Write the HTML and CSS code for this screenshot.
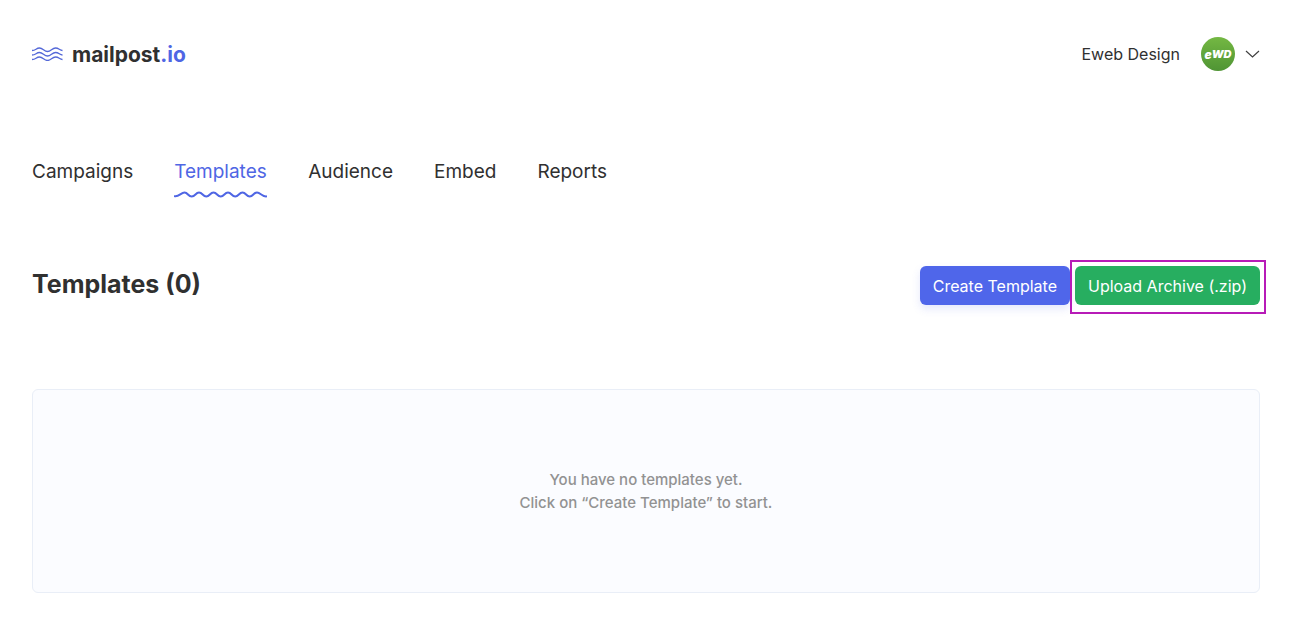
FILE: index.html
```html
<!DOCTYPE html>
<html lang="en">
<head>
    <meta charset="UTF-8">
    <meta name="viewport" content="width=device-width, initial-scale=1.0">
    <title>Templates - mailpost.io</title>
    <link rel="stylesheet" href="styles.css">
</head>
<body>
<header class="header">
    <a class="logo" href="#">
        <svg class="logo-waves" viewBox="0 0 32 14" aria-hidden="true">
            <path d="M0 3.500C4 3.500 4 1 7.500 1s4.500 3.500 8 3.500S20 1 23.500 1s4 2.500 7 2.500"/>
            <path d="M0 8C4 8 4 5.500 7.500 5.500S12 9 15.500 9s4.500-3.500 8-3.500S27.500 8 30.500 8"/>
            <path d="M0 12.500C4 12.500 4 10 7.500 10s4.500 3.500 8 3.500 4.500-3.500 8-3.500 4 2.500 7 2.500"/>
        </svg>
        <span class="logo-text">mailpost<span class="logo-io">.io</span></span>
    </a>

    <button class="account" type="button">
        <span class="account-name">Eweb Design</span>
        <span class="avatar">e<span class="avatar-wd">WD</span></span>
        <svg class="chevron" viewBox="0 0 15 8" aria-hidden="true"><path d="M1 1l6.500 6L14 1"/></svg>
    </button>
</header>

<nav class="nav">
    <a class="nav-link" href="#">Campaigns</a>
    <a class="nav-link active" href="#">Templates
        <svg class="nav-wave" viewBox="0 0 93 7" preserveAspectRatio="none" aria-hidden="true">
            <path d="M0 5C4 7 7 1.500 10.500 1.500S14 5.500 17.700 5.500 21.500 1.500 25 1.500s3.800 4 7.300 4S36 1.500 39.500 1.500s3.700 4 7.200 4S50.500 1.500 54 1.500s3.700 4 7.200 4S65 1.500 68.500 1.500s3.700 4 7.200 4S79.500 1.500 83 1.500s6 5 10 3.800"/>
        </svg>
    </a>
    <a class="nav-link" href="#">Audience</a>
    <a class="nav-link" href="#">Embed</a>
    <a class="nav-link" href="#">Reports</a>
</nav>

<main>
    <div class="title-row">
        <h1 class="title">Templates (0)</h1>
        <div class="buttons">
            <button class="btn btn-create" type="button">Create Template</button>
            <button class="btn btn-upload" type="button">Upload Archive (.zip)</button>
        </div>
    </div>

    <div class="empty">
        <p class="empty-text">You have no templates yet.<br>Click on “Create Template” to start.</p>
    </div>
</main>
</body>
</html>
```
FILE: styles.css
```css
*
{
    box-sizing:border-box;
}
body
{
    margin:0;
    padding:36px 32px 28px;
    background-color:white;
    color:#303030;
    font-family:Inter, "Liberation Sans", sans-serif;
    font-size:16px;
}
a
{
    color:inherit;
    text-decoration:none;
}
button
{
    border:none;
    font-family:inherit;
    font-size:16px;
    cursor:pointer;
}
svg
{
    fill:none;
}
.header
{
    display:flex;
    align-items:center;
    justify-content:space-between;
}
.logo
{
    display:flex;
    align-items:center;
    gap:8px;
}
.logo-waves
{
    width:32px;
    height:14px;
    stroke:#5468d8;
    stroke-width:1.3;
}
.logo-text
{
    font-size:21px;
    font-weight:700;
}
.logo-io
{
    color:#4f66e4;
}
.account
{
    display:flex;
    align-items:center;
    padding:0;
    background:none;
    color:#303030;
}
.avatar
{
    display:flex;
    align-items:center;
    justify-content:center;
    width:34px;
    height:34px;
    margin:1px 10px 1px 21px;
    border-radius:50%;
    background:linear-gradient(#74b843, #4f9434);
    color:white;
    font-size:12px;
    font-style:italic;
    font-weight:900;
}
.avatar-wd
{
    font-size:11px;
}
.chevron
{
    width:15px;
    height:8px;
    stroke:#404040;
    stroke-width:1.2;
}
.nav
{
    display:flex;
    gap:41px;
    margin-top:88px;
}
.nav-link
{
    font-size:19px;
    line-height:24px;
}
.active
{
    color:#4f66e4;
}
.nav-wave
{
    display:block;
    width:100%;
    height:7px;
    margin-top:7px;
    stroke:#4f66e4;
    stroke-width:2;
}
.title-row
{
    display:flex;
    align-items:center;
    justify-content:space-between;
    margin-top:68px;
}
.title
{
    margin:0;
    padding-bottom:4px;
    font-size:25px;
    line-height:32px;
    font-weight:700;
}
.buttons
{
    display:flex;
    gap:5px;
}
.btn
{
    height:39px;
    padding:0 13px;
    border-radius:6px;
    color:white;
}
.btn-create
{
    background-color:#4f66ea;
    box-shadow:0 4px 8px rgba(79, 102, 234, 0.15);
}
.btn-upload
{
    position:relative;
    background-color:#27ae60;
}
.btn-upload::after
{
    content:"";
    position:absolute;
    top:-6px;
    right:-6px;
    bottom:-9px;
    left:-5px;
    border:2px solid #b71bb7;
}
.empty
{
    display:flex;
    align-items:center;
    justify-content:center;
    margin-top:84px;
    padding:78px 20px;
    border:1px solid #e9eef7;
    border-radius:6px;
    background-color:#fbfcff;
}
.empty-text
{
    margin:0;
    color:#929292;
    font-size:15px;
    font-weight:500;
    line-height:23px;
    text-align:center;
}
```
